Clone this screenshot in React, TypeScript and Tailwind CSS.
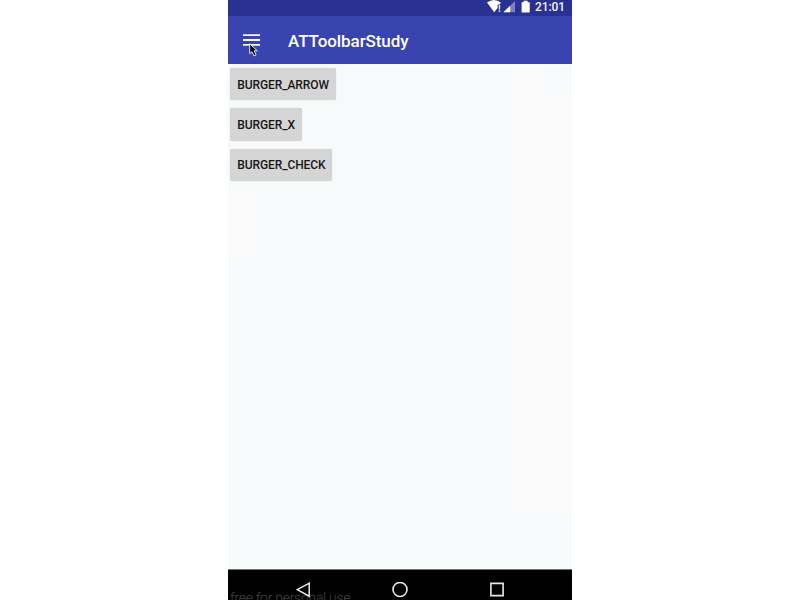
import React from "react";

const buttons = [
  { label: "BURGER_ARROW", width: "w-[106px]" },
  { label: "BURGER_X", width: "w-[72px]" },
  { label: "BURGER_CHECK", width: "w-[102px]" },
];

function StatusBar() {
  return (
    <div className="flex h-4 items-start justify-end bg-[#293193] pr-[7px]">
      <svg width="48" height="16" viewBox="0 0 48 16" className="shrink-0">
        <path d="M0 2.6Q7-2.4 14 2.6L12.6 4.4H10.6V8L7.2 12.2Z" fill="#fff" />
        <path d="M11.7 5h1.5v4.4h-1.5zM11.7 10.3h1.5v1.6h-1.5z" fill="#d9dbf1" />
        <path d="M28 1V12.3H16.4Z" fill="#7a80c0" />
        <path d="M23.2 5.7V12.3H16.4Z" fill="#fff" />
        <path d="M34.6 2.2h2V.8h4v1.4h2.1v10.4h-8.1z" fill="#fff" />
      </svg>
      <span className="-mt-px text-[12px] font-medium leading-4 tracking-[-0.1px] text-[#f4f4ff]">21:01</span>
    </div>
  );
}

function Toolbar() {
  return (
    <header className="relative flex h-[47.5px] items-center bg-[#3944b1] pl-[14.5px] text-white">
      <svg width="17" height="12" viewBox="0 0 17 12" className="shrink-0">
        <path d="M0 1.2h17M0 6h17M0 10.8h17" stroke="#f5f6ff" strokeWidth="1.8" />
      </svg>
      <h1 className="ml-[28.5px] pt-[2px] text-[17px] font-medium leading-6 tracking-[-0.08px]">ATToolbarStudy</h1>
      <svg width="10" height="14" viewBox="0 0 10 14" className="absolute left-[21px] top-[27px]">
        <path d="M.7.8V10.7L3 8.7 4.9 12.9 7.1 11.9 5.2 7.8H8.3Z" fill="#080808" stroke="#e4e5f4" strokeWidth="1" />
      </svg>
    </header>
  );
}

export default function App() {
  return (
    <div className="flex h-[600px] w-[800px] justify-center overflow-hidden bg-white font-['Roboto',sans-serif]">
      <div className="flex w-[344px] flex-col">
        <StatusBar />
        <Toolbar />
        <main className="flex h-[505.5px] flex-col items-start gap-2 bg-[#f6fafb] bg-[linear-gradient(#f6fafb,#f6fafb),linear-gradient(#fbfbfb,#fbfbfb),linear-gradient(#fbfbfb,#fbfbfb)] bg-[length:28px_32px,60px_449px,28px_64px] bg-[position:316px_0,284px_0,0_128px] bg-no-repeat pl-[2px] pt-[4.5px]">
          {buttons.map((button) => (
            <button
              key={button.label}
              className={`flex h-[32.3px] items-center rounded-[2px] bg-[#d5d5d5] pl-[7.3px] pt-px text-[12px] font-medium tracking-[-0.1px] text-[#171717] shadow-[0_0_1px_#c9cdce] ${button.width}`}
            >
              {button.label}
            </button>
          ))}
        </main>
        <nav className="relative h-[31px] overflow-hidden border-t border-[#707070] bg-black">
          <span className="absolute left-[2px] top-[19px] whitespace-nowrap text-[14px] font-light leading-[18px] tracking-[-0.28px] text-[#444444]">
            free for personal use
          </span>
          <div className="relative flex items-start pl-[68px] pt-[12px]">
            <svg width="15" height="16" viewBox="0 0 15 16" fill="none" stroke="#e8e8e8" strokeWidth="1.5">
              <path d="M13.2 1.2V14.2L1.3 7.7Z" fill="#000" />
            </svg>
            <svg width="16" height="16" viewBox="0 0 16 16" className="ml-[81px]" fill="none" stroke="#e8e8e8" strokeWidth="1.6">
              <circle cx="8" cy="7.5" r="7" />
            </svg>
            <svg width="14" height="16" viewBox="0 0 14 16" className="ml-[82px]" fill="none" stroke="#e8e8e8" strokeWidth="1.6">
              <path d="M.9 1.4H13.1V13.6H.9Z" />
            </svg>
          </div>
        </nav>
      </div>
    </div>
  );
}
